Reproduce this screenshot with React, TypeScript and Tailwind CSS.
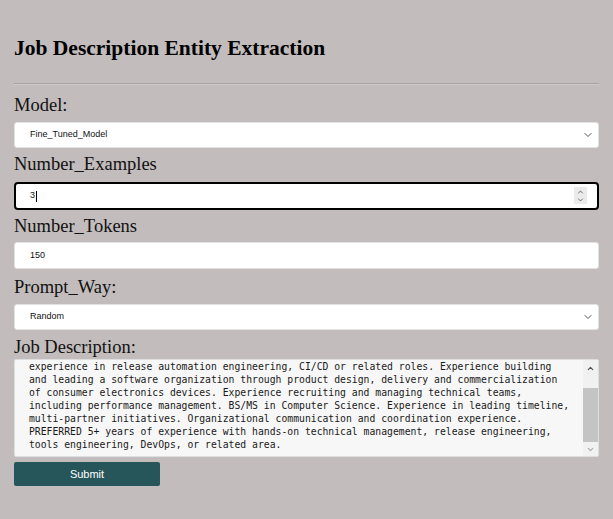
import { ChevronDown, ChevronUp } from "lucide-react";

const jobLines = [
  "experience in release automation engineering, CI/CD or related roles. Experience building",
  "and leading a software organization through product design, delivery and commercialization",
  "of consumer electronics devices. Experience recruiting and managing technical teams,",
  "including performance management. BS/MS in Computer Science. Experience in leading timeline,",
  "multi-partner initiatives. Organizational communication and coordination experience.",
  "PREFERRED 5+ years of experience with hands-on technical management, release engineering,",
  "tools engineering, DevOps, or related area.",
];

function Label({ text, className }: { text: string; className: string }) {
  return (
    <label className={`block text-[18.5px] leading-[22px] text-[#111] font-['Liberation_Serif',serif] ${className}`}>
      {text}
    </label>
  );
}

function SelectBox({ value }: { value: string }) {
  return (
    <div className="relative flex h-[26px] items-center rounded-[3px] border border-[#e2e2e2] bg-white pl-[15px] text-[9px] text-[#111]">
      {value}
      <ChevronDown className="absolute right-[4px] top-[6px] h-[12px] w-[12px] text-[#555]" strokeWidth={2} />
    </div>
  );
}

export default function App() {
  return (
    <div className="min-h-screen bg-[#c3bcbc] px-[14px] font-['Liberation_Sans',Arial,sans-serif]">
      <h2 className="pt-[37px] text-[21.5px] leading-[22px] font-bold text-black font-['Liberation_Serif',serif]">
        Job Description Entity Extraction
      </h2>
      <hr className="mt-[24px] border-0 border-t border-b border-t-[#a4a4a4] border-b-[#d0caca]" />

      <Label text="Model:" className="mt-[9px] mb-[6px]" />
      <SelectBox value="Fine_Tuned_Model" />

      <Label text="Number_Examples" className="mt-[5px] mb-[7px]" />
      <div className="relative flex h-[28px] items-center rounded-[4px] border-2 border-black bg-white pl-[14px] text-[9px] text-[#111]">
        3
        <span className="ml-[1px] inline-block h-[11px] w-px bg-black" />
        <div className="absolute right-[10px] top-[3px] flex h-[17px] w-[13px] flex-col items-center justify-center bg-[#ebebeb]">
          <ChevronUp className="h-[8px] w-[9px] text-[#555]" strokeWidth={2.5} />
          <ChevronDown className="h-[8px] w-[9px] text-[#555]" strokeWidth={2.5} />
        </div>
      </div>

      <Label text="Number_Tokens" className="mt-[5px] mb-[5px]" />
      <div className="flex h-[27px] items-center rounded-[3px] border border-[#e2e2e2] bg-white pl-[15px] text-[9px] text-[#111]">
        150
      </div>

      <Label text="Prompt_Way:" className="mt-[7px] mb-[6px]" />
      <SelectBox value="Random" />

      <Label text="Job Description:" className="mt-[6px] mb-[1px]" />
      <div className="relative flex h-[98px] overflow-hidden rounded-[2px] border border-[#dedede] bg-[#f7f7f7]">
        <div className="flex-1 pl-[14px] text-[9.75px] leading-[13px] text-[#1a1a1a] font-['DejaVu_Sans_Mono',monospace]">
          {jobLines.map((line) => (
            <div key={line} className="whitespace-pre">
              {line}
            </div>
          ))}
        </div>
        <div className="flex w-[15px] flex-col bg-[#f1f1f1]">
          <div className="flex h-[17px] items-center justify-center">
            <ChevronUp className="h-[9px] w-[9px] text-[#505050]" strokeWidth={3} />
          </div>
          <div className="h-[11px]" />
          <div className="h-[54px] bg-[#c4c4c4]" />
          <div className="flex flex-1 items-center justify-center">
            <ChevronDown className="h-[9px] w-[9px] text-[#a8a8a8]" strokeWidth={3} />
          </div>
        </div>
      </div>

      <button className="mt-[5px] h-[24px] w-[146px] rounded-[2px] bg-[#27565a] text-[11px] text-white">
        Submit
      </button>
    </div>
  );
}
